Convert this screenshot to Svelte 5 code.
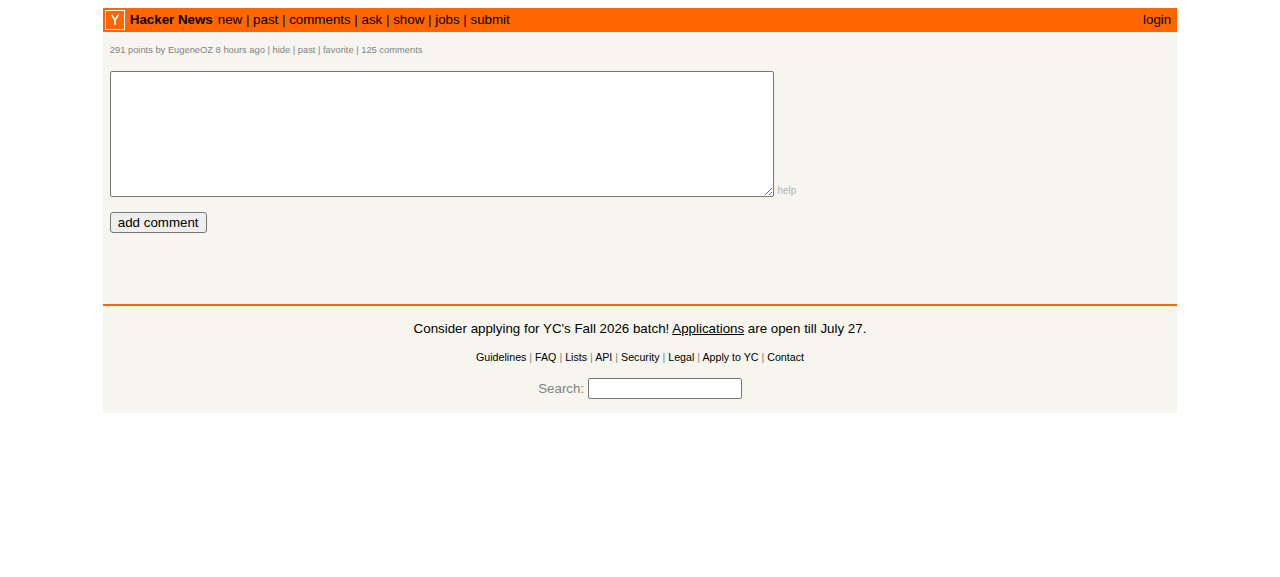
<script>
  const nav = ['new', 'past', 'comments', 'ask', 'show', 'jobs', 'submit'];
  const sub = ['hide', 'past', 'favorite', '125 comments'];
  const foot = ['Guidelines', 'FAQ', 'Lists', 'API', 'Security', 'Legal', 'Apply to YC', 'Contact'];
</script>

<div class="page">
  <header class="top">
    <a class="logo" href="#top" aria-label="Y Combinator">
      <svg width="18" height="18" viewBox="0 0 18 18" aria-hidden="true">
        <path d="M5.6 3.7 L9 9 V13.7 M12.4 3.7 L9 9" fill="none" stroke="#fff" stroke-width="1.6" />
      </svg>
    </a>
    <b class="name">Hacker News</b>
    <nav class="nav">
      {#each nav as item, i}{#if i > 0}{' | '}{/if}<a href="#top">{item}</a>{/each}
    </nav>
    <a class="login" href="#top">login</a>
  </header>

  <main class="main">
    <div class="sub">
      291 points by <a href="#top">EugeneOZ</a> 8 hours ago{#each sub as item}{' | '}<a href="#top">{item}</a>{/each}
    </div>
    <div class="reply">
      <textarea class="box" aria-label="comment"></textarea>
      <a class="help" href="#top">help</a>
    </div>
    <button class="btn" type="button">add comment</button>
  </main>

  <footer class="foot">
    <p class="notice">Consider applying for YC's Fall 2026 batch! <a href="#top">Applications</a> are open till July 27.</p>
    <p class="links">
      {#each foot as item, i}{#if i > 0}{' | '}{/if}<a href="#top">{item}</a>{/each}
    </p>
    <form class="search">Search: <input class="field" type="text" aria-label="search" /></form>
  </footer>
</div>

<style>
  :global(body) {
    margin: 0;
    background: #fff;
    font-family: "Liberation Sans", Arial, sans-serif;
  }
  a {
    color: inherit;
    text-decoration: none;
  }
  .page {
    width: 1074.4px;
    margin: 8px 0 0 102.8px;
    background: #f6f6ef;
    color: #000;
    font-size: 13.33px;
  }
  .top {
    display: flex;
    align-items: center;
    height: 24px;
    padding: 0 6px 2px 2px;
    box-sizing: border-box;
    background: #ff6600;
    line-height: 15px;
  }
  .logo {
    box-sizing: border-box;
    flex: none;
    width: 20px;
    height: 20px;
    margin-bottom: -2px;
    border: 1px solid #fff;
  }
  .logo svg {
    display: block;
  }
  .name {
    margin-left: 5px;
  }
  .nav {
    margin-left: 5px;
    white-space: pre;
  }
  .login {
    margin-left: auto;
  }
  .main {
    height: 272px;
    padding: 0 7px;
    box-sizing: border-box;
  }
  .sub {
    padding-top: 12px;
    color: #828282;
    font-size: 9.33px;
    line-height: 12px;
  }
  .reply {
    display: flex;
    align-items: flex-end;
    margin-top: 15px;
  }
  .box {
    box-sizing: border-box;
    display: block;
    width: 664px;
    height: 126px;
    margin: 0;
    padding: 2px;
    background: #fff;
    border: 1px solid #767676;
    border-radius: 2px;
  }
  .help {
    margin-left: 3.7px;
    color: #afafaf;
    font-size: 10px;
    line-height: 12px;
  }
  .btn {
    display: block;
    box-sizing: border-box;
    width: 97px;
    height: 21px;
    margin: 15px 0 0;
    padding: 0 0 0 7px;
    background: #efefef;
    border: 1px solid #767676;
    border-radius: 3px;
    color: #000;
    font-family: "Liberation Sans", Arial, sans-serif;
    font-size: 13.33px;
    text-align: left;
  }
  .foot {
    border-top: 2px solid #ff6600;
    height: 109px;
    box-sizing: border-box;
    text-align: center;
  }
  .notice {
    margin: 0;
    padding-top: 15px;
    line-height: 15px;
  }
  .notice a {
    text-decoration: underline;
  }
  .links {
    margin: 0;
    padding-top: 15px;
    color: #828282;
    font-size: 10.67px;
    line-height: 13px;
  }
  .links a {
    color: #000;
  }
  .search {
    margin-top: 14px;
    color: #828282;
    line-height: 21px;
  }
  .field {
    box-sizing: border-box;
    width: 154px;
    height: 21px;
    margin: 0;
    padding: 1px 2px;
    background: #fff;
    border: 1px solid #767676;
    border-radius: 2px;
    vertical-align: bottom;
  }
</style>
